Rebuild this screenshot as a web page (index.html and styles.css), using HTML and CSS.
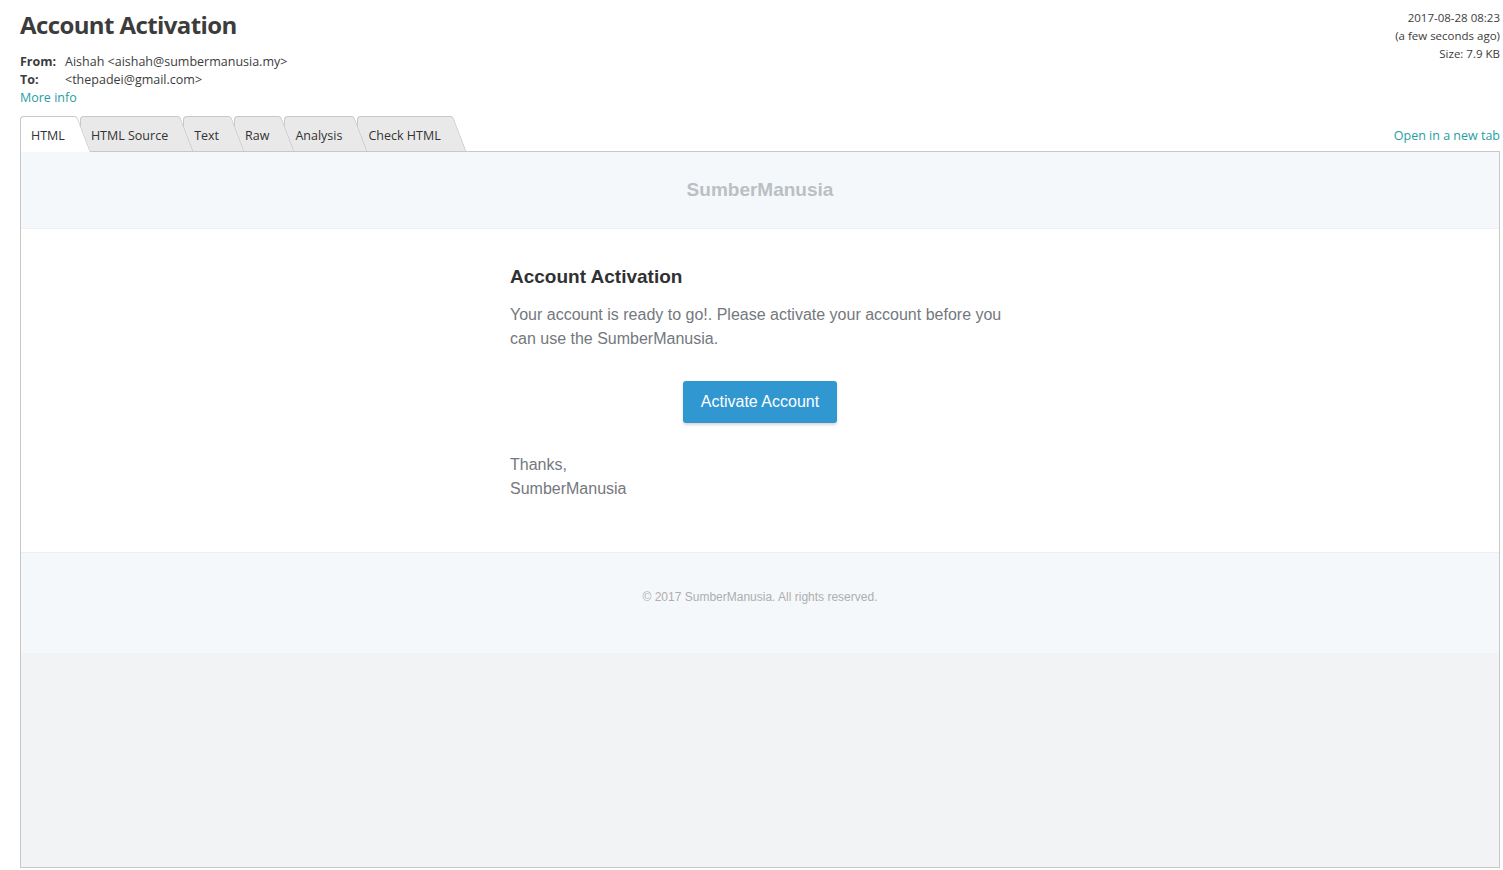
FILE: index.html
```html
<!DOCTYPE html>
<html>
<head>
<meta charset="utf-8">
<title>Account Activation</title>
<link rel="stylesheet" href="styles.css">
</head>
<body>
<div class="page">
  <header class="msg-head">
    <div class="msg-left">
      <h1 class="msg-title">Account Activation</h1>
      <div class="meta">
        <div class="meta-row"><span class="meta-label">From:</span><span>Aishah &lt;aishah@sumbermanusia.my&gt;</span></div>
        <div class="meta-row"><span class="meta-label">To:</span><span>&lt;thepadei@gmail.com&gt;</span></div>
        <a class="link" href="#">More info</a>
      </div>
    </div>
    <div class="msg-right">
      <div>2017-08-28 08:23</div>
      <div>(a few seconds ago)</div>
      <div>Size: 7.9 KB</div>
    </div>
  </header>

  <nav class="tabbar">
    <div class="tabs">
      <span class="tab active" style="z-index:10">HTML</span>
      <span class="tab" style="z-index:6">HTML Source</span>
      <span class="tab" style="z-index:5">Text</span>
      <span class="tab" style="z-index:4">Raw</span>
      <span class="tab" style="z-index:3">Analysis</span>
      <span class="tab" style="z-index:2">Check HTML</span>
    </div>
    <a class="link newtab" href="#">Open in a new tab</a>
  </nav>

  <section class="frame">
    <div class="mail-header">SumberManusia</div>
    <div class="mail-body">
      <div class="mail-inner">
        <h2 class="mail-h1">Account Activation</h2>
        <p class="mail-p">Your account is ready to go!. Please activate your account before you can use the SumberManusia.</p>
        <div class="btn-wrap"><a class="btn" href="#">Activate Account</a></div>
        <p class="mail-p">Thanks,<br>SumberManusia</p>
      </div>
    </div>
    <div class="mail-footer">© 2017 SumberManusia. All rights reserved.</div>
    <div class="mail-rest"></div>
  </section>
</div>
</body>
</html>
```
FILE: styles.css
```css
* { box-sizing: border-box; }
html, body { margin: 0; padding: 0; background: #fff; }
body {
  font-family: "Open Sans", "Noto Sans", "DejaVu Sans", sans-serif;
  color: #3c3c3c;
}
.page {
  height: 870px;
  padding: 9px 3px 2px 20px;
  display: flex;
  flex-direction: column;
}
.msg-head {
  display: flex;
  justify-content: space-between;
  align-items: flex-start;
}
.msg-title {
  margin: 0;
  font-size: 24px;
  line-height: 32px;
  font-weight: 700;
  color: #3c3c3c;
  letter-spacing: -0.6px;
}
.meta {
  margin-top: 12px;
  font-size: 12.5px;
  line-height: 18px;
}
.meta-row { display: flex; }
.meta-label { width: 45px; font-weight: 700; }
.link { color: #1f9ea3; text-decoration: none; font-size: 12.5px; line-height: 18px; }
.msg-right {
  text-align: right;
  font-size: 11.5px;
  line-height: 18px;
}
.tabbar {
  margin-top: 9px;
  display: flex;
  justify-content: space-between;
  align-items: flex-end;
  margin-bottom: -1px;
  position: relative;
  z-index: 2;
}
.tabs { display: flex; align-items: flex-end; }
.tab {
  position: relative;
  height: 35px;
  line-height: 39px;
  padding: 0 10px 0 11px;
  margin-right: 5px;
  margin-bottom: 1px;
  font-size: 12.5px;
  color: #333;
}
.tab::before, .tab::after {
  content: "";
  position: absolute;
  top: 0;
  bottom: 0;
  z-index: -1;
  background: #e9e9e9;
  border-top: 1px solid #c8c8c8;
}
.tab::before {
  left: 0;
  right: 4px;
  border-left: 1px solid #c8c8c8;
  border-top-left-radius: 4px;
}
.tab::after {
  right: -2px;
  width: 26px;
  border-right: 1px solid #c8c8c8;
  border-top-right-radius: 3px;
  transform: skewX(21deg);
  transform-origin: top left;
}
.tab.active { height: 36px; margin-bottom: 0; line-height: 39px; padding-bottom: 1px; }
.tab.active::before, .tab.active::after { background: #fff; }
.newtab { line-height: 20px; padding-bottom: 6px; font-size: 12.5px; }

.frame {
  flex: 1;
  border: 1px solid #c8c8c8;
  display: flex;
  flex-direction: column;
  font-family: "Liberation Sans", Arial, sans-serif;
  background: #f2f4f6;
}
.mail-header {
  background: #f5f8fa;
  height: 77px;
  border-bottom: 1px solid #edeff2;
  display: flex;
  align-items: center;
  justify-content: center;
  font-size: 19px;
  font-weight: 700;
  color: #bbbfc3;
  padding-bottom: 1px;
}
.mail-body {
  background: #fff;
  border-bottom: 1px solid #edeff2;
  display: flex;
  justify-content: center;
}
.mail-inner {
  width: 570px;
  padding: 36px 35px 35px;
}
.mail-h1 {
  margin: 0 0 14px;
  font-size: 19px;
  line-height: 24px;
  font-weight: 700;
  color: #2f3133;
}
.mail-p {
  margin: 0 0 16px;
  font-size: 16px;
  line-height: 24px;
  color: #74787e;
}
.btn-wrap {
  display: flex;
  justify-content: center;
  margin: 30px 0 30px;
}
.btn {
  display: inline-block;
  background: #3097d1;
  color: #fff;
  text-decoration: none;
  font-size: 16px;
  line-height: 22px;
  padding: 10px 18px;
  border-radius: 3px;
  box-shadow: 0 2px 3px rgba(0, 0, 0, 0.16);
}
.mail-footer {
  background: #f5f8fa;
  padding: 35px 35px 47px;
  text-align: center;
  font-size: 12px;
  line-height: 18px;
  color: #aeaeae;
}
.mail-rest { flex: 1; background: #f2f3f5; }
```
